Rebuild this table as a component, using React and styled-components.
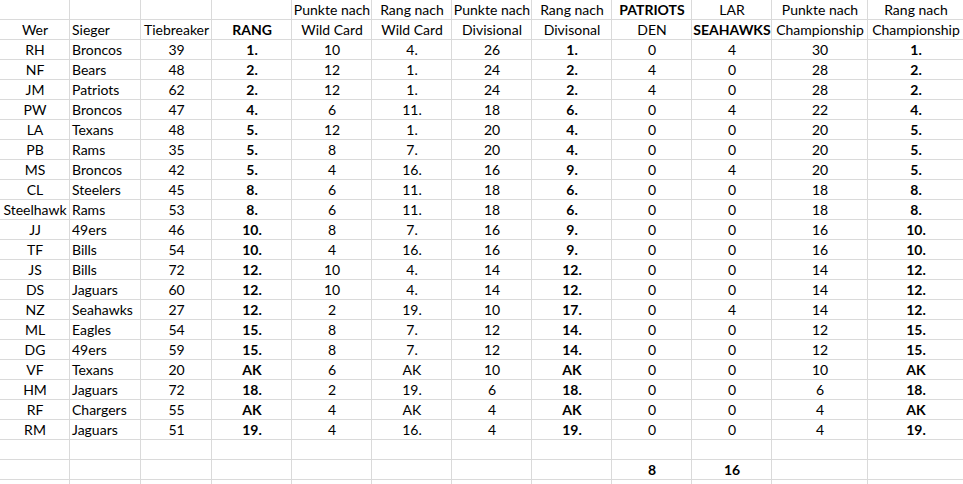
import styled, { createGlobalStyle } from "styled-components";

const GlobalStyle = createGlobalStyle`
  html, body {
    margin: 0;
    padding: 0;
    background: #ffffff;
    overflow: hidden;
  }
`;

const widths = [70, 71, 71, 80, 80, 80, 80, 80, 80, 80, 96, 96];

// how each column is aligned and whether it is bold
const columns = [
  { align: "center" },
  { align: "left" },
  { align: "center" },
  { align: "center", bold: true },
  { align: "center" },
  { align: "center" },
  { align: "center" },
  { align: "center", bold: true },
  { align: "center" },
  { align: "center" },
  { align: "center" },
  { align: "center", bold: true },
];

const headerTop = [
  "", "", "", "", "Punkte nach", "Rang nach", "Punkte nach", "Rang nach",
  { text: "PATRIOTS", bold: true }, "LAR", "Punkte nach", "Rang nach",
];

const headerBottom = [
  "Wer", "Sieger", "Tiebreaker", { text: "RANG", bold: true }, "Wild Card", "Wild Card",
  "Divisional", "Divisonal", "DEN", { text: "SEAHAWKS", bold: true }, "Championship", "Championship",
];

const rows = [
  ["RH", "Broncos", 39, "1.", 10, "4.", 26, "1.", 0, 4, 30, "1."],
  ["NF", "Bears", 48, "2.", 12, "1.", 24, "2.", 4, 0, 28, "2."],
  ["JM", "Patriots", 62, "2.", 12, "1.", 24, "2.", 4, 0, 28, "2."],
  ["PW", "Broncos", 47, "4.", 6, "11.", 18, "6.", 0, 4, 22, "4."],
  ["LA", "Texans", 48, "5.", 12, "1.", 20, "4.", 0, 0, 20, "5."],
  ["PB", "Rams", 35, "5.", 8, "7.", 20, "4.", 0, 0, 20, "5."],
  ["MS", "Broncos", 42, "5.", 4, "16.", 16, "9.", 0, 4, 20, "5."],
  ["CL", "Steelers", 45, "8.", 6, "11.", 18, "6.", 0, 0, 18, "8."],
  ["Steelhawk", "Rams", 53, "8.", 6, "11.", 18, "6.", 0, 0, 18, "8."],
  ["JJ", "49ers", 46, "10.", 8, "7.", 16, "9.", 0, 0, 16, "10."],
  ["TF", "Bills", 54, "10.", 4, "16.", 16, "9.", 0, 0, 16, "10."],
  ["JS", "Bills", 72, "12.", 10, "4.", 14, "12.", 0, 0, 14, "12."],
  ["DS", "Jaguars", 60, "12.", 10, "4.", 14, "12.", 0, 0, 14, "12."],
  ["NZ", "Seahawks", 27, "12.", 2, "19.", 10, "17.", 0, 4, 14, "12."],
  ["ML", "Eagles", 54, "15.", 8, "7.", 12, "14.", 0, 0, 12, "15."],
  ["DG", "49ers", 59, "15.", 8, "7.", 12, "14.", 0, 0, 12, "15."],
  ["VF", "Texans", 20, "AK", 6, "AK", 10, "AK", 0, 0, 10, "AK"],
  ["HM", "Jaguars", 72, "18.", 2, "19.", 6, "18.", 0, 0, 6, "18."],
  ["RF", "Chargers", 55, "AK", 4, "AK", 4, "AK", 0, 0, 4, "AK"],
  ["RM", "Jaguars", 51, "19.", 4, "16.", 4, "19.", 0, 0, 4, "19."],
];

const blank = Array(12).fill("");
const totals = ["", "", "", "", "", "", "", "", { text: "8", bold: true }, { text: "16", bold: true }, "", ""];

const Sheet = styled.div`
  display: grid;
  grid-template-columns: ${widths.map((w) => `${w}px`).join(" ")};
  grid-auto-rows: 20px;
  width: max-content;
  font-family: Lato, "Open Sans", sans-serif;
  font-size: 14px;
  color: #000000;
`;

const Cell = styled.div`
  box-sizing: border-box;
  border-right: 1px solid #dadada;
  border-bottom: 1px solid #dadada;
  display: flex;
  align-items: flex-end;
  justify-content: ${({ $align }) => ($align === "left" ? "flex-start" : "center")};
  padding: 0 1px 1px 2px;
  line-height: 17px;
  font-weight: ${({ $bold }) => ($bold ? 700 : 400)};
  white-space: nowrap;
  overflow: hidden;
`;

const renderRow = (row, key, isHeader) =>
  row.map((value, i) => {
    const item = typeof value === "object" ? value : { text: value };
    const bold = isHeader ? item.bold : item.bold ?? columns[i].bold;
    return (
      <Cell key={`${key}-${i}`} $align={columns[i].align} $bold={bold}>
        {item.text}
      </Cell>
    );
  });

export default function App() {
  return (
    <>
      <GlobalStyle />
      <Sheet>
        {renderRow(headerTop, "h1", true)}
        {renderRow(headerBottom, "h2", true)}
        {rows.map((row, r) => renderRow(row, `r${r}`, false))}
        {renderRow(blank, "blank", true)}
        {renderRow(totals, "sum", true)}
        {renderRow(blank, "tail", true)}
      </Sheet>
    </>
  );
}
